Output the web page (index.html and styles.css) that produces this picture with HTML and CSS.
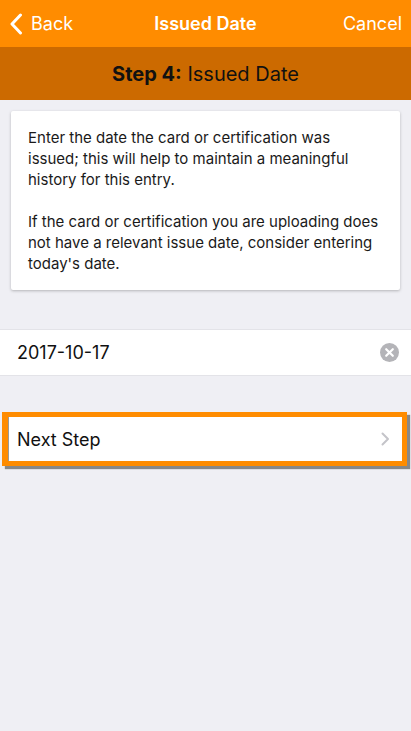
FILE: index.html
```html
<!DOCTYPE html>
<html>
<head>
<meta charset="utf-8">
<link rel="stylesheet" href="styles.css">
</head>
<body>
<div class="app">
  <header class="nav">
    <div class="nav-left">
      <svg class="back-chev" width="14" height="22" viewBox="0 0 14 22"><path d="M11.5 2 L3 11 L11.5 20" fill="none" stroke="#fff" stroke-width="3" stroke-linecap="round" stroke-linejoin="round"/></svg>
      <span>Back</span>
    </div>
    <div class="nav-title">Issued Date</div>
    <div class="nav-right">Cancel</div>
  </header>
  <div class="stepbar"><b>Step 4:</b> Issued Date</div>
  <main class="content">
    <section class="card">
      <p>Enter the date the card or certification was issued; this will help to maintain a meaningful history for this entry.</p>
      <p>If the card or certification you are uploading does not have a relevant issue date, consider entering today's date.</p>
    </section>
    <div class="date-row">
      <span class="date-text">2017-10-17</span>
      <svg class="clear" width="19" height="19" viewBox="0 0 19 19"><circle cx="9.5" cy="9.5" r="9.5" fill="#b4b4b8"/><path d="M6.2 6.2 L12.8 12.8 M12.8 6.2 L6.2 12.8" stroke="#fff" stroke-width="2.2" stroke-linecap="round"/></svg>
    </div>
    <div class="next-wrap">
      <div class="next-row">
        <span>Next Step</span>
        <svg class="chev" width="9" height="14" viewBox="0 0 9 14"><path d="M1.5 1.5 L7 7 L1.5 12.5" fill="none" stroke="#c4c4c9" stroke-width="2" stroke-linecap="round" stroke-linejoin="round"/></svg>
      </div>
    </div>
  </main>
</div>
</body>
</html>
```

FILE: styles.css
```css
* { box-sizing: border-box; }
html, body { margin: 0; padding: 0; }
body {
  width: 411px;
  height: 731px;
  background: #efeff4;
  font-family: Inter, "Noto Sans", sans-serif;
  color: #111;
  overflow: hidden;
}
.app { display: flex; flex-direction: column; height: 731px; }
.nav {
  height: 47px;
  background: #ff8c00;
  display: flex;
  align-items: center;
  justify-content: space-between;
  padding: 0 9px 0 9px;
  color: #fff;
  font-size: 18px;
  position: relative;
}
.nav-left { display: flex; align-items: center; gap: 8px; }
.back-chev { display: block; }
.nav-title {
  position: absolute;
  left: 0; right: 0;
  text-align: center;
  font-weight: 600;
  pointer-events: none;
}
.stepbar {
  height: 53px;
  background: #cc6a00;
  display: flex;
  align-items: center;
  justify-content: center;
  font-size: 20px;
  color: #111;
  white-space: pre;
}
.stepbar b { font-weight: 700; }
.content { flex: 1; padding-top: 11px; }
.card {
  margin: 0 11px;
  background: #fff;
  border-radius: 2px;
  box-shadow: 0 1px 3px rgba(0,0,0,0.25);
  padding: 16px 17px 16px 17px;
  font-size: 15px;
  line-height: 21px;
  color: #1a1a1a;
}
.card p { margin: 0; }
.card p + p { margin-top: 21px; }
.date-row {
  margin-top: 39px;
  height: 47px;
  background: #fff;
  border-top: 1px solid #e3e3e8;
  border-bottom: 1px solid #e3e3e8;
  display: flex;
  align-items: center;
  justify-content: space-between;
  padding: 0 12px 0 17px;
  font-size: 18px;
}
.clear { display: block; }
.next-wrap {
  margin: 36px 4px 0 2px;
  border: 5px solid #ff8c00;
  border-left-width: 6px;
  box-shadow: 3px 3px 1px #888;
}
.next-row {
  height: 44px;
  background: #fff;
  border-left: 1px solid #999;
  display: flex;
  align-items: center;
  justify-content: space-between;
  padding: 0 12px 0 8px;
  font-size: 18px;
}
.chev { display: block; }
```
